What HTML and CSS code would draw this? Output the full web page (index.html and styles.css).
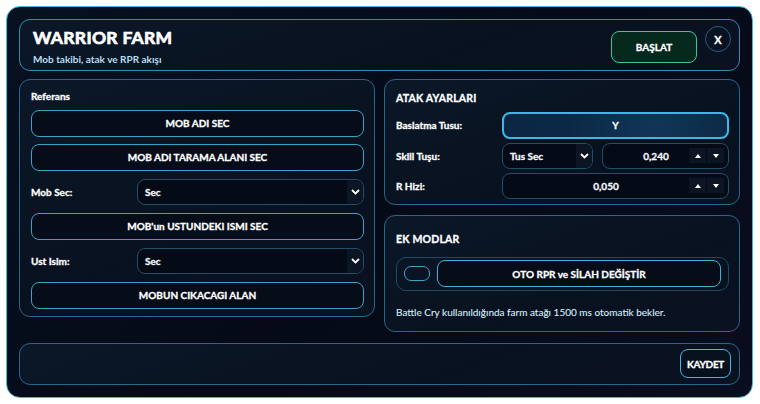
FILE: index.html
```html
<!DOCTYPE html>
<html lang="tr">
<head>
<meta charset="utf-8">
<title>Warrior Farm</title>
<link rel="stylesheet" href="styles.css">
</head>
<body>
<div class="app">
  <header class="card header">
    <div class="titles">
      <h1 class="title">WARRIOR FARM</h1>
      <p class="subtitle">Mob takibi, atak ve RPR akışı</p>
    </div>
    <div class="header-actions">
      <button class="btn-start">BAŞLAT</button>
      <button class="btn-close">X</button>
    </div>
  </header>

  <main class="main">
    <section class="card left">
      <div class="section-title">Referans</div>
      <button class="btn">MOB ADI SEC</button>
      <button class="btn">MOB ADI TARAMA ALANI SEC</button>
      <div class="row">
        <span class="label">Mob Sec:</span>
        <div class="select grow"><span>Sec</span><span class="chev"><svg width="9" height="6" viewBox="0 0 9 6"><path d="M1 1l3.5 3.5L8 1" fill="none" stroke="#fff" stroke-width="1.8"/></svg></span></div>
      </div>
      <button class="btn">MOB'un USTUNDEKI ISMI SEC</button>
      <div class="row">
        <span class="label">Ust Isim:</span>
        <div class="select grow"><span>Sec</span><span class="chev"><svg width="9" height="6" viewBox="0 0 9 6"><path d="M1 1l3.5 3.5L8 1" fill="none" stroke="#fff" stroke-width="1.8"/></svg></span></div>
      </div>
      <button class="btn">MOBUN CIKACAGI ALAN</button>
    </section>

    <div class="right">
      <section class="card attack">
        <div class="section-title caps">ATAK AYARLARI</div>
        <div class="row">
          <span class="label">Baslatma Tusu:</span>
          <div class="keybox grow">Y</div>
        </div>
        <div class="row">
          <span class="label">Skill Tuşu:</span>
          <div class="select skill"><span>Tus Sec</span><span class="chev"><svg width="9" height="6" viewBox="0 0 9 6"><path d="M1 1l3.5 3.5L8 1" fill="none" stroke="#fff" stroke-width="1.8"/></svg></span></div>
          <div class="spin grow"><span class="spin-val">0,240</span><span class="spin-btns"><span class="sb"><svg width="6" height="4" viewBox="0 0 6 4"><path d="M0 4L3 0L6 4z" fill="#fff"/></svg></span><span class="sb"><svg width="6" height="4" viewBox="0 0 6 4"><path d="M0 0L3 4L6 0z" fill="#fff"/></svg></span></span></div>
        </div>
        <div class="row">
          <span class="label">R Hizi:</span>
          <div class="spin grow"><span class="spin-val">0,050</span><span class="spin-btns"><span class="sb"><svg width="6" height="4" viewBox="0 0 6 4"><path d="M0 4L3 0L6 4z" fill="#fff"/></svg></span><span class="sb"><svg width="6" height="4" viewBox="0 0 6 4"><path d="M0 0L3 4L6 0z" fill="#fff"/></svg></span></span></div>
        </div>
      </section>

      <section class="card extra">
        <div class="section-title caps">EK MODLAR</div>
        <div class="mod-row">
          <span class="toggle"></span>
          <button class="btn mod-btn">OTO RPR ve SİLAH DEĞİŞTİR</button>
        </div>
        <p class="note">Battle Cry kullanıldığında farm atağı 1500 ms otomatik bekler.</p>
      </section>
    </div>
  </main>

  <footer class="card footer">
    <button class="btn-save">KAYDET</button>
  </footer>
</div>
</body>
</html>
```

FILE: styles.css
```css
* { box-sizing: border-box; }
html, body { margin: 0; padding: 0; background: #ffffff; }
body { font-family: "Lato", "Liberation Sans", sans-serif; color: #f1f7ff; }

button { font-family: inherit; color: inherit; cursor: pointer; }

.app {
  margin: 6px;
  width: 747px;
  height: 392px;
  border: 1px solid #3fb6dc;
  border-radius: 14px;
  background: linear-gradient(135deg, #081120 0%, #050a16 50%, #0a0d1e 100%);
  padding: 12px;
  display: flex;
  flex-direction: column;
  gap: 8px;
}

.card {
  border: 1px solid #24688c;
  border-radius: 11px;
  background: linear-gradient(160deg, #0b1828 0%, #08111f 60%, #0a1222 100%);
}

.header {
  height: 53px;
  display: flex;
  justify-content: space-between;
  align-items: center;
  padding: 0 8px 0 13px;
  border-color: #2f8bb4;
}
.titles { padding-top: 3px; }
.title {
  margin: 0;
  font-size: 17.5px;
  font-weight: 700;
  line-height: 20px;
  letter-spacing: 0.3px;
  color: #ffffff;
  -webkit-text-stroke: 0.7px #ffffff;
}
.subtitle {
  margin: 5px 0 0;
  font-size: 10px;
  font-weight: 700;
  line-height: 12px;
  color: #b9def2;
}
.header-actions {
  display: flex;
  align-items: flex-start;
  gap: 8px;
  align-self: stretch;
  padding-top: 6px;
}
.strong,
.btn-start, .btn-close, .btn, .label, .select, .spin-val, .keybox, .section-title, .btn-save {
  -webkit-text-stroke: 0.3px #ffffff;
}
.btn-start {
  margin-top: 5px;
  width: 86px;
  height: 32px;
  border: 1px solid #3cc893;
  border-radius: 8px;
  background: #06291d;
  font-size: 10px;
  font-weight: 700;
  color: #ffffff;
}
.btn-close {
  width: 26px;
  height: 26px;
  border: 1px solid #285f7d;
  border-radius: 50%;
  background: transparent;
  font-size: 11px;
  font-weight: 700;
  padding: 0;
  color: #ffffff;
}

.main {
  display: grid;
  grid-template-columns: 356px 356px;
  gap: 9px;
  align-items: start;
}

.left {
  height: 238px;
  padding: 10px 10px 0 11px;
  display: flex;
  flex-direction: column;
  gap: 7px;
}
.section-title {
  font-size: 10px;
  font-weight: 700;
  line-height: 12px;
  color: #ffffff;
  margin-bottom: 1px;
}
.section-title.caps { font-size: 10.5px; letter-spacing: 0.2px; }

.btn {
  height: 27px;
  border: 1px solid #38a3c6;
  border-radius: 8px;
  background: #060d19;
  font-size: 10px;
  font-weight: 700;
  color: #ffffff;
  padding: 0;
  width: 100%;
}

.row {
  display: flex;
  align-items: center;
  gap: 9px;
}
.label {
  width: 106px;
  flex: none;
  margin-right: -9px;
  font-size: 10px;
  font-weight: 700;
  color: #ffffff;
}
.grow { flex: 1; }

.select {
  height: 26px;
  border: 1px solid #264d68;
  border-radius: 8px;
  background: #050b16;
  display: flex;
  align-items: center;
  justify-content: space-between;
  padding-left: 7px;
  font-size: 10px;
  font-weight: 700;
  overflow: hidden;
}
.left .select { margin: 1px 0; }
.chev {
  width: 16px;
  align-self: stretch;
  background: #0b1523;
  display: flex;
  align-items: center;
  justify-content: center;
}

.right {
  display: flex;
  flex-direction: column;
  gap: 10px;
}
.attack {
  height: 126px;
  padding: 12px 10px 0 11px;
  display: flex;
  flex-direction: column;
  gap: 4px;
}
.attack .section-title { margin-bottom: 4px; }
.keybox {
  height: 27px;
  border: 2px solid #3db8e6;
  border-radius: 8px;
  background:
    radial-gradient(circle at 70% 40%, rgba(80,150,200,0.10), transparent 60%),
    linear-gradient(90deg, #0a2642 0%, #0b2b4a 60%, #0a2744 100%);
  display: flex;
  align-items: center;
  justify-content: center;
  font-size: 10px;
  font-weight: 700;
  color: #ffffff;
}
.skill { width: 91px; flex: none; }
.attack .select, .attack .spin { height: 26px; }

.spin {
  height: 26px;
  border: 1px solid #264d68;
  border-radius: 8px;
  background: #050b16;
  display: flex;
  align-items: center;
  padding-right: 4px;
}
.spin-val {
  flex: 1;
  text-align: center;
  padding-left: 20px;
  font-size: 10px;
  font-weight: 700;
}
.spin-btns { display: flex; gap: 1px; }
.sb {
  width: 17px;
  height: 15px;
  background: #0b1523;
  display: flex;
  align-items: center;
  justify-content: center;
}

.extra {
  height: 117px;
  padding: 17px 10px 0 11px;
}
.extra .section-title { margin-bottom: 12px; }
.mod-row {
  height: 34px;
  border: 1px solid #1f4b66;
  border-radius: 10px;
  display: flex;
  align-items: center;
  padding: 0 7px 0 7px;
  gap: 7px;
}
.toggle {
  width: 26px;
  height: 15px;
  border: 1px solid #3aa3c8;
  border-radius: 7px;
  flex: none;
}
.mod-btn { flex: 1; width: auto; height: 27px; border-color: #3fb2d8; }
.note {
  margin: 15px 0 0;
  font-size: 10px;
  font-weight: 400;
  color: #d7ecfa;
  line-height: 12px;
  -webkit-text-stroke: 0.1px #d7ecfa;
}

.footer {
  margin-top: 3px;
  height: 43px;
  display: flex;
  justify-content: flex-end;
  align-items: center;
  padding-right: 8px;
}
.btn-save {
  width: 51px;
  height: 29px;
  border: 1px solid #3db8e0;
  border-radius: 8px;
  background: #07101d;
  font-size: 10px;
  font-weight: 700;
  padding: 0;
  color: #ffffff;
  letter-spacing: -0.3px;
}
```
